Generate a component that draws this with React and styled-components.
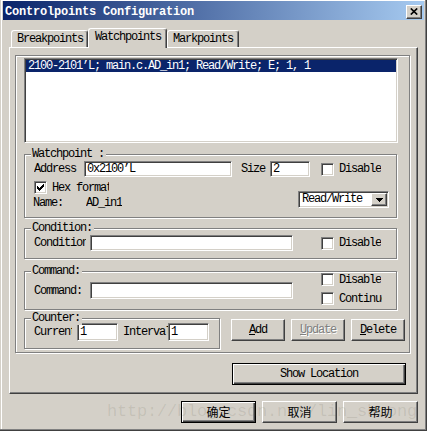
import React from 'react';
import styled, { createGlobalStyle, css } from 'styled-components';

const GlobalStyle = createGlobalStyle`
  html, body { margin: 0; padding: 0; background: #d4d0c8; }
  body {
    font-family: "Liberation Mono", "DejaVu Sans Mono", monospace;
    font-size: 12px;
    letter-spacing: -1.2px;
    color: #000;
  }
  * { box-sizing: border-box; }
`;

const sunken = css`
  border: 1px solid;
  border-color: #808080 #fff #fff #808080;
  box-shadow: inset 1px 1px #404040, inset -1px -1px #d4d0c8;
  background: #fff;
`;

const raised = css`
  border: 1px solid;
  border-color: #fff #404040 #404040 #fff;
  box-shadow: inset -1px -1px #808080;
  background: #d4d0c8;
`;

const Window = styled.div`
  position: relative;
  width: 427px;
  height: 431px;
  background: #d4d0c8;
  padding: 1px 3px 0 3px;
  display: flex;
  flex-direction: column;
  overflow: hidden;
  box-shadow: inset -1px -1px #404040, inset -2px -2px #808080,
    inset 1px 0 #d4d0c8, inset 2px 1px #fff;
`;

const TitleBar = styled.div`
  height: 19px;
  display: flex;
  align-items: center;
  padding: 3px 2px 0 2px;
  background: linear-gradient(to right, #0a246a, #a6caf0);
`;

const TitleText = styled.div`
  flex: 1;
  color: #fff;
  font-weight: bold;
  letter-spacing: -0.2px;
  line-height: 16px;
  white-space: nowrap;
`;

const CloseBtn = styled.div`
  ${raised};
  width: 16px;
  height: 14px;
  display: flex;
  align-items: center;
  justify-content: center;
  padding-right: 1px;
  padding-bottom: 1px;
`;

const Body = styled.div`
  display: flex;
  flex-direction: column;
  padding: 0 6px;
`;

const TabRow = styled.div`
  display: flex;
  align-items: flex-end;
  height: 19px;
  margin-top: 8px;
  padding-left: 2px;
  position: relative;
  z-index: 1;
`;

const Tab = styled.div`
  width: ${(p) => p.$w}px;
  height: ${(p) => (p.$active ? 20 : 17)}px;
  margin-bottom: ${(p) => (p.$active ? -1 : 0)}px;
  padding-left: ${(p) => p.$pl}px;
  padding-bottom: ${(p) => (p.$active ? 3 : 0)}px;
  display: flex;
  align-items: center;
  background: #d4d0c8;
  border-top: 1px solid #fff;
  border-left: 1px solid #fff;
  border-right: 1px solid #404040;
  box-shadow: inset -1px 0 #808080;
  border-radius: 3px 3px 0 0;
  line-height: 12px;
  white-space: nowrap;
  position: relative;
  z-index: ${(p) => (p.$active ? 2 : 1)};
`;

const Panel = styled.div`
  width: 409px;
  height: 347px;
  border: 1px solid;
  border-color: #fff #404040 #404040 #fff;
  box-shadow: inset -1px -1px #808080;
  padding: 7px 0 0 5px;
  display: flex;
  flex-direction: column;
`;

const Frame = styled.div`
  width: 395px;
  height: 298px;
  border: 1px solid #808080;
  box-shadow: inset 1px 1px #fff, 1px 1px #fff;
  padding: 2px 0 0 8px;
  display: flex;
  flex-direction: column;
`;

const ListBox = styled.div`
  ${sunken};
  width: 374px;
  height: 85px;
  padding: 1px;
`;

const ListItem = styled.div`
  height: 12px;
  line-height: 12px;
  padding-left: 2px;
  background: ${(p) => (p.$selected ? '#0a246a' : 'transparent')};
  color: ${(p) => (p.$selected ? '#fff' : '#000')};
  white-space: nowrap;
`;

const Group = styled.div`
  position: relative;
  width: ${(p) => p.$w || 373}px;
  height: ${(p) => p.$h}px;
  margin-top: ${(p) => p.$mt || 0}px;
  border: 1px solid #808080;
  box-shadow: inset 1px 1px #fff, 1px 1px #fff;
  padding: ${(p) => p.$pt}px 0 0 9px;
  flex-shrink: 0;
`;

const GroupLabel = styled.div`
  position: absolute;
  top: -8px;
  left: 6px;
  padding: 0 2px 0 1px;
  background: #d4d0c8;
  line-height: 14px;
  white-space: nowrap;
`;

const Row = styled.div`
  display: flex;
  align-items: center;
  height: ${(p) => p.$h}px;
  margin-top: ${(p) => p.$mt || 0}px;
`;

const Label = styled.div`
  width: ${(p) => (p.$w ? `${p.$w}px` : 'auto')};
  margin-left: ${(p) => p.$ml || 0}px;
  line-height: 12px;
  white-space: nowrap;
  overflow: hidden;
  flex-shrink: 0;
`;

const Field = styled.div`
  ${sunken};
  width: ${(p) => p.$w}px;
  height: ${(p) => p.$h || 16}px;
  margin-left: ${(p) => p.$ml || 0}px;
  padding-left: 2px;
  display: flex;
  align-items: center;
  line-height: 12px;
  white-space: nowrap;
  overflow: hidden;
  flex-shrink: 0;
`;

const CheckBox = styled.div`
  ${sunken};
  width: 13px;
  height: 13px;
  margin-left: ${(p) => p.$ml || 0}px;
  display: flex;
  align-items: center;
  justify-content: center;
  flex-shrink: 0;
`;

const Lower = styled.div`
  display: flex;
  margin-top: 4px;
`;

const LeftCol = styled.div`
  display: flex;
  flex-direction: column;
`;

const Combo = styled.div`
  ${sunken};
  width: 91px;
  height: 17px;
  margin-left: auto;
  margin-right: 7px;
  margin-top: 10px;
  padding: 1px;
  display: flex;
  align-items: stretch;
`;

const ComboText = styled.div`
  flex: 1;
  padding-left: 2px;
  line-height: 13px;
  white-space: nowrap;
`;

const ComboBtn = styled.div`
  ${raised};
  width: 16px;
  display: flex;
  align-items: center;
  justify-content: center;
`;

const CmdRow = styled.div`
  display: flex;
  align-items: flex-start;
`;

const CheckCol = styled.div`
  display: flex;
  flex-direction: column;
  gap: 6px;
  margin-left: 28px;
  margin-top: 1px;
`;

const CounterRow = styled.div`
  display: flex;
  align-items: flex-start;
  margin-top: 8px;
`;

const BtnGroup = styled.div`
  display: flex;
  gap: 6px;
  margin-left: 11px;
  margin-top: 1px;
`;

const Btn = styled.div`
  width: ${(p) => p.$w}px;
  height: 22px;
  margin-left: ${(p) => p.$ml || 0}px;
  margin-top: ${(p) => p.$mt || 0}px;
  display: flex;
  align-items: center;
  justify-content: center;
  line-height: 12px;
  white-space: nowrap;
  flex-shrink: 0;
  ${(p) =>
    p.$default
      ? css`
          border: 1px solid #000;
          background: #d4d0c8;
          box-shadow: inset 1px 1px #fff, inset -1px -1px #404040,
            inset -2px -2px #808080;
        `
      : raised};
  ${(p) =>
    p.$disabled &&
    css`
      color: #808080;
      text-shadow: 1px 1px #fff;
    `};
  ${(p) =>
    p.$cjk &&
    css`
      font-family: "Noto Sans CJK SC", "Noto Sans", sans-serif;
      letter-spacing: 0;
      font-size: 12px;
    `};
`;

const BottomRow = styled.div`
  display: flex;
  justify-content: flex-end;
  gap: 6px;
  margin-top: 7px;
`;

const Watermark = styled.div`
  position: absolute;
  left: 107px;
  top: 402px;
  font-family: "Liberation Mono", monospace;
  font-size: 17px;
  line-height: 20px;
  letter-spacing: -0.2px;
  color: rgba(90, 80, 70, 0.13);
  pointer-events: none;
  white-space: nowrap;
  z-index: 10;
`;

const CheckMark = () => (
  <svg width="7" height="7" viewBox="0 0 7 7" shapeRendering="crispEdges">
    <path
      fill="#000"
      d="M6 0h1v1h-1z M5 1h2v1h-2z M0 2h1v1h-1z M4 2h3v1h-3z M0 3h2v1h-2z M3 3h3v1h-3z M0 4h5v1h-5z M1 5h3v1h-3z M2 6h1v1h-1z"
    />
  </svg>
);

const Check = ({ checked, ml }) => (
  <CheckBox $ml={ml}>{checked && <CheckMark />}</CheckBox>
);

export default function App() {
  return (
    <>
      <GlobalStyle />
      <Window>
        <TitleBar>
          <TitleText>Controlpoints Configuration</TitleText>
          <CloseBtn>
            <svg width="8" height="7" viewBox="0 0 8 7">
              <path d="M0.8 0.5 L7.2 6.5 M7.2 0.5 L0.8 6.5" stroke="#000" strokeWidth="1.7" />
            </svg>
          </CloseBtn>
        </TitleBar>
        <Body>
          <TabRow>
            <Tab $w={77} $pl={5}>Breakpoints</Tab>
            <Tab $w={79} $pl={6} $active>Watchpoints</Tab>
            <Tab $w={72} $pl={5}>Markpoints</Tab>
          </TabRow>
          <Panel>
            <Frame>
              <ListBox>
                <ListItem $selected>2100-2101’L; main.c.AD_in1; Read/Write; E; 1, 1</ListItem>
              </ListBox>

              <Group $h={64} $mt={11} $pt={6}>
                <GroupLabel>Watchpoint :</GroupLabel>
                <Row $h={16}>
                  <Label $w={50}>Address</Label>
                  <Field $w={148}>0x2100’L</Field>
                  <Label $w={29} $ml={9}>Size</Label>
                  <Field $w={40}>2</Field>
                  <Check ml={11} />
                  <Label $ml={5}>Disable</Label>
                </Row>
                <Lower>
                  <LeftCol>
                    <Row $h={13}>
                      <Check checked />
                      <Label $w={57} $ml={5}>Hex format</Label>
                    </Row>
                    <Row $h={12} $mt={3}>
                      <Label $w={53} $ml={-1}>Name:</Label>
                      <Label>AD_in1</Label>
                    </Row>
                  </LeftCol>
                  <Combo>
                    <ComboText>Read/Write</ComboText>
                    <ComboBtn>
                      <svg width="7" height="4" viewBox="0 0 7 4" shapeRendering="crispEdges">
                        <path fill="#000" d="M0 0h7v1h-7z M1 1h5v1h-5z M2 2h3v1h-3z M3 3h1v1h-1z" />
                      </svg>
                    </ComboBtn>
                  </Combo>
                </Lower>
              </Group>

              <Group $h={31} $mt={10} $pt={6}>
                <GroupLabel>Condition:</GroupLabel>
                <Row $h={16}>
                  <Label $w={52}>Condition</Label>
                  <Field $w={203} $ml={4} />
                  <Check ml={28} />
                  <Label $ml={5}>Disable</Label>
                </Row>
              </Group>

              <Group $h={39} $mt={12} $pt={0}>
                <GroupLabel>Command:</GroupLabel>
                <CmdRow>
                  <Row $h={17} $mt={10}>
                    <Label $w={56}>Command:</Label>
                    <Field $w={203} $h={17} />
                  </Row>
                  <CheckCol>
                    <Row $h={13}>
                      <Check />
                      <Label $ml={5}>Disable</Label>
                    </Row>
                    <Row $h={13}>
                      <Check />
                      <Label $w={43} $ml={5}>Continue</Label>
                    </Row>
                  </CheckCol>
                </CmdRow>
              </Group>

              <CounterRow>
                <Group $w={196} $h={31} $pt={4}>
                  <GroupLabel>Counter:</GroupLabel>
                  <Row $h={18}>
                    <Label $w={38}>Current</Label>
                    <Field $w={41} $h={18} $ml={5}>1</Field>
                    <Label $w={45} $ml={5}>Interval</Label>
                    <Field $w={41} $h={18}>1</Field>
                  </Row>
                </Group>
                <BtnGroup>
                  <Btn $w={54}><u>A</u>dd</Btn>
                  <Btn $w={54} $disabled><u>U</u>pdate</Btn>
                  <Btn $w={54}><u>D</u>elete</Btn>
                </BtnGroup>
              </CounterRow>
            </Frame>
            <Btn $w={174} $ml={217} $mt={10} $default>Show Location</Btn>
          </Panel>
          <BottomRow>
            <Btn $w={75} $default $cjk>确定</Btn>
            <Btn $w={75} $cjk>取消</Btn>
            <Btn $w={75} $cjk>帮助</Btn>
          </BottomRow>
        </Body>
        <Watermark>http://blog.csdn.net/lin_shuong</Watermark>
      </Window>
    </>
  );
}
